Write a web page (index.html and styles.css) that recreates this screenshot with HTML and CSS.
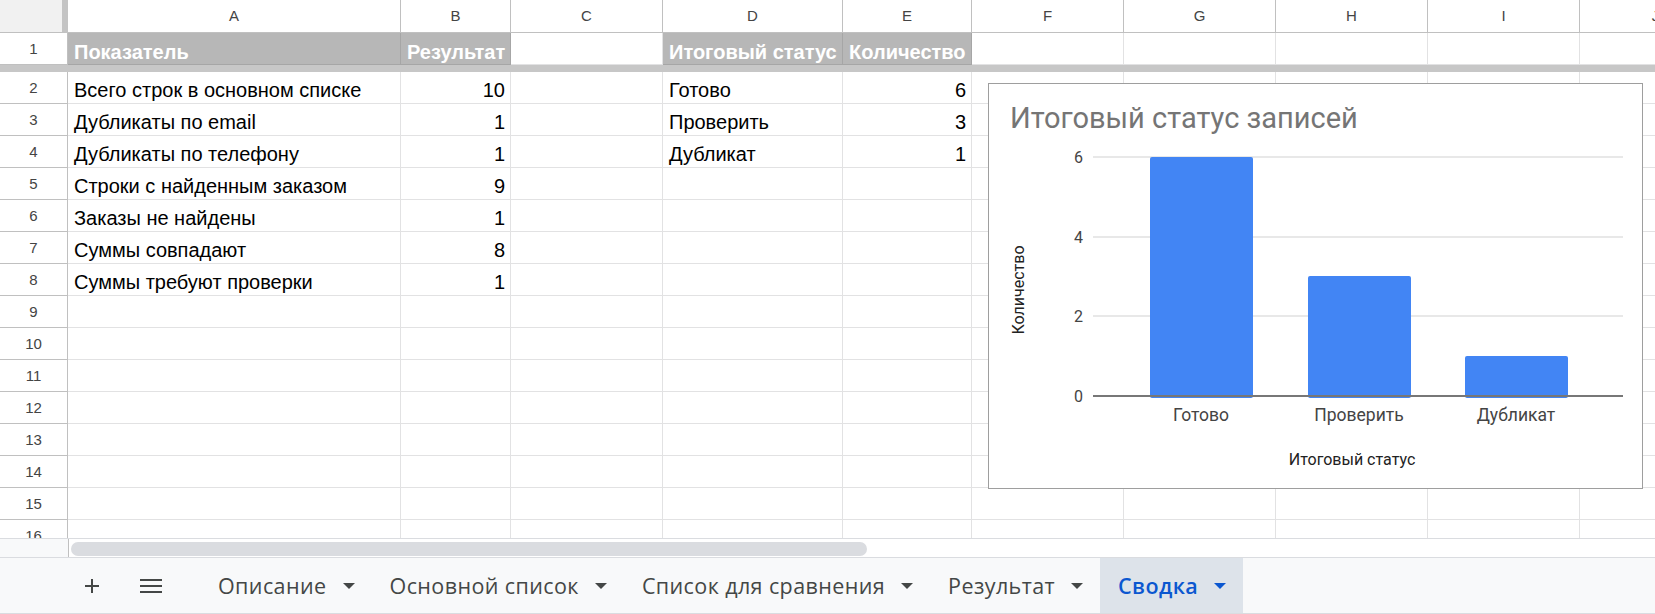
FILE: index.html
```html
<!DOCTYPE html>
<html lang="ru">
<head>
    <meta charset="UTF-8">
    <title>Сводка</title>
    <link rel="stylesheet" href="styles.css">
</head>
<body>
<div class="sheet">
    <div class="grid">
        <div class="row head">
            <div class="corner"></div>
            <div class="ch">A</div><div class="ch">B</div><div class="ch">C</div><div class="ch">D</div><div class="ch">E</div>
            <div class="ch">F</div><div class="ch">G</div><div class="ch">H</div><div class="ch">I</div><div class="ch">J</div>
        </div>
        <div class="row first">
            <div class="rh">1</div>
            <div class="cell hd">Показатель</div><div class="cell hd">Результат</div><div class="cell"></div>
            <div class="cell hd">Итоговый статус</div><div class="cell hd">Количество</div>
            <div class="cell"></div><div class="cell"></div><div class="cell"></div><div class="cell"></div><div class="cell"></div>
        </div>
        <div class="freeze"></div>
        <div class="row">
            <div class="rh">2</div>
            <div class="cell">Всего строк в основном списке</div><div class="cell num">10</div><div class="cell"></div>
            <div class="cell">Готово</div><div class="cell num">6</div>
            <div class="cell"></div><div class="cell"></div><div class="cell"></div><div class="cell"></div><div class="cell"></div>
        </div>
        <div class="row">
            <div class="rh">3</div>
            <div class="cell">Дубликаты по email</div><div class="cell num">1</div><div class="cell"></div>
            <div class="cell">Проверить</div><div class="cell num">3</div>
            <div class="cell"></div><div class="cell"></div><div class="cell"></div><div class="cell"></div><div class="cell"></div>
        </div>
        <div class="row">
            <div class="rh">4</div>
            <div class="cell">Дубликаты по телефону</div><div class="cell num">1</div><div class="cell"></div>
            <div class="cell">Дубликат</div><div class="cell num">1</div>
            <div class="cell"></div><div class="cell"></div><div class="cell"></div><div class="cell"></div><div class="cell"></div>
        </div>
        <div class="row">
            <div class="rh">5</div>
            <div class="cell">Строки с найденным заказом</div><div class="cell num">9</div><div class="cell"></div>
            <div class="cell"></div><div class="cell"></div>
            <div class="cell"></div><div class="cell"></div><div class="cell"></div><div class="cell"></div><div class="cell"></div>
        </div>
        <div class="row">
            <div class="rh">6</div>
            <div class="cell">Заказы не найдены</div><div class="cell num">1</div><div class="cell"></div>
            <div class="cell"></div><div class="cell"></div>
            <div class="cell"></div><div class="cell"></div><div class="cell"></div><div class="cell"></div><div class="cell"></div>
        </div>
        <div class="row">
            <div class="rh">7</div>
            <div class="cell">Суммы совпадают</div><div class="cell num">8</div><div class="cell"></div>
            <div class="cell"></div><div class="cell"></div>
            <div class="cell"></div><div class="cell"></div><div class="cell"></div><div class="cell"></div><div class="cell"></div>
        </div>
        <div class="row">
            <div class="rh">8</div>
            <div class="cell">Суммы требуют проверки</div><div class="cell num">1</div><div class="cell"></div>
            <div class="cell"></div><div class="cell"></div>
            <div class="cell"></div><div class="cell"></div><div class="cell"></div><div class="cell"></div><div class="cell"></div>
        </div>
        <div class="row">
            <div class="rh">9</div>
            <div class="cell"></div><div class="cell"></div><div class="cell"></div><div class="cell"></div><div class="cell"></div>
            <div class="cell"></div><div class="cell"></div><div class="cell"></div><div class="cell"></div><div class="cell"></div>
        </div>
        <div class="row">
            <div class="rh">10</div>
            <div class="cell"></div><div class="cell"></div><div class="cell"></div><div class="cell"></div><div class="cell"></div>
            <div class="cell"></div><div class="cell"></div><div class="cell"></div><div class="cell"></div><div class="cell"></div>
        </div>
        <div class="row">
            <div class="rh">11</div>
            <div class="cell"></div><div class="cell"></div><div class="cell"></div><div class="cell"></div><div class="cell"></div>
            <div class="cell"></div><div class="cell"></div><div class="cell"></div><div class="cell"></div><div class="cell"></div>
        </div>
        <div class="row">
            <div class="rh">12</div>
            <div class="cell"></div><div class="cell"></div><div class="cell"></div><div class="cell"></div><div class="cell"></div>
            <div class="cell"></div><div class="cell"></div><div class="cell"></div><div class="cell"></div><div class="cell"></div>
        </div>
        <div class="row">
            <div class="rh">13</div>
            <div class="cell"></div><div class="cell"></div><div class="cell"></div><div class="cell"></div><div class="cell"></div>
            <div class="cell"></div><div class="cell"></div><div class="cell"></div><div class="cell"></div><div class="cell"></div>
        </div>
        <div class="row">
            <div class="rh">14</div>
            <div class="cell"></div><div class="cell"></div><div class="cell"></div><div class="cell"></div><div class="cell"></div>
            <div class="cell"></div><div class="cell"></div><div class="cell"></div><div class="cell"></div><div class="cell"></div>
        </div>
        <div class="row">
            <div class="rh">15</div>
            <div class="cell"></div><div class="cell"></div><div class="cell"></div><div class="cell"></div><div class="cell"></div>
            <div class="cell"></div><div class="cell"></div><div class="cell"></div><div class="cell"></div><div class="cell"></div>
        </div>
        <div class="row">
            <div class="rh">16</div>
            <div class="cell"></div><div class="cell"></div><div class="cell"></div><div class="cell"></div><div class="cell"></div>
            <div class="cell"></div><div class="cell"></div><div class="cell"></div><div class="cell"></div><div class="cell"></div>
        </div>

        <!-- chart floats over F2:J14 -->
        <div class="chart">
            <svg width="653" height="404" viewBox="0 0 653 404">
                <text class="chart-title" x="21" y="44">Итоговый статус записей</text>
                <g class="gridlines">
                    <line x1="104" y1="73" x2="634" y2="73"/>
                    <line x1="104" y1="153" x2="634" y2="153"/>
                    <line x1="104" y1="232" x2="634" y2="232"/>
                </g>
                <g class="ticks">
                    <text x="94" y="79">6</text>
                    <text x="94" y="159">4</text>
                    <text x="94" y="238">2</text>
                    <text x="94" y="318">0</text>
                </g>
                <g class="bars">
                    <rect x="161" y="73" width="103" height="241" rx="2"/>
                    <rect x="319" y="192" width="103" height="122" rx="2"/>
                    <rect x="476" y="272" width="103" height="42" rx="2"/>
                </g>
                <line class="baseline" x1="104" y1="312" x2="634" y2="312"/>
                <g class="cats">
                    <text x="212" y="337">Готово</text>
                    <text x="370" y="337">Проверить</text>
                    <text x="527" y="337">Дубликат</text>
                </g>
                <text class="axis-title" x="363" y="381">Итоговый статус</text>
                <text class="axis-title" transform="translate(35 206) rotate(-90)">Количество</text>
            </svg>
        </div>
    </div>

    <div class="hscroll">
        <div class="hscroll-gutter"></div>
        <div class="hscroll-thumb"></div>
    </div>

    <div class="tabbar">
        <div class="tab-btn">
            <svg width="16" height="16" viewBox="0 0 16 16"><path d="M8 1v14M1 8h14" stroke="#444746" stroke-width="2"/></svg>
        </div>
        <div class="tab-btn">
            <svg width="22" height="16" viewBox="0 0 22 16"><path d="M0 2h22M0 8h22M0 14h22" stroke="#444746" stroke-width="2"/></svg>
        </div>
        <div class="tabs">
            <div class="tab">Описание <span class="caret"></span></div>
            <div class="tab">Основной список <span class="caret"></span></div>
            <div class="tab">Список для сравнения <span class="caret"></span></div>
            <div class="tab">Результат <span class="caret"></span></div>
            <div class="tab active">Сводка <span class="caret"></span></div>
        </div>
    </div>
</div>
</body>
</html>
```

FILE: styles.css
```css
body {
    margin: 0;
    font-family: "Liberation Sans", Arial, sans-serif;
    background: #fff;
    overflow: hidden;
}
.sheet {
    width: 1655px;
    height: 614px;
    display: flex;
    flex-direction: column;
    overflow: hidden;
}
.grid {
    position: relative;
    flex: none;
    height: 539px;
    overflow: hidden;
    border-bottom: 1px solid #dadce0;
    box-sizing: border-box;
}
.row {
    display: grid;
    grid-template-columns: 68px 333px 110px 152px 180px 129px 152px 152px 152px 152px 152px;
    height: 32px;
}
.row.head {
    height: 33px;
}
.corner {
    background: #f1f1f1;
    border-right: 6px solid #c4c4c4;
    border-bottom: 1px solid #c0c0c0;
}
.ch {
    border-right: 1px solid #c0c0c0;
    border-bottom: 1px solid #c0c0c0;
    text-align: center;
    font-size: 15px;
    line-height: 32px;
    color: #444;
}
.rh {
    border-right: 1px solid #c0c0c0;
    border-bottom: 1px solid #c0c0c0;
    text-align: center;
    font-size: 15px;
    line-height: 31px;
    color: #444;
}
.cell {
    box-sizing: border-box;
    border-right: 1px solid #e2e2e3;
    border-bottom: 1px solid #e2e2e3;
    padding: 7px 6px 0 6px;
    font-size: 20px;
    line-height: 23px;
    color: #000;
    white-space: nowrap;
    overflow: hidden;
}
.cell.num {
    text-align: right;
    padding-right: 5px;
}
.first .cell {
    padding-top: 8px;
}
.cell.hd {
    background: #b7b7b7;
    color: #fff;
    font-weight: bold;
    border-right-color: #a6a6a6;
    border-bottom-color: #a6a6a6;
}
.freeze {
    height: 7px;
    background: #c7c7c7;
}

/* chart */
.chart {
    position: absolute;
    left: 988px;
    top: 83px;
    width: 655px;
    height: 406px;
    box-sizing: border-box;
    border: 1px solid #9e9e9e;
    background: #fff;
}
.chart svg {
    display: block;
    font-family: Roboto, "Liberation Sans", sans-serif;
}
.chart-title {
    font-size: 29px;
    fill: #757575;
}
.gridlines line {
    stroke: #e0e0e0;
    stroke-width: 1.5;
}
.baseline {
    stroke: #777;
    stroke-width: 2;
}
.bars rect {
    fill: #4285f4;
}
.ticks text {
    font-size: 16px;
    fill: #444;
    text-anchor: end;
}
.cats text {
    font-size: 17.5px;
    fill: #444;
    text-anchor: middle;
}
.axis-title {
    font-size: 16px;
    fill: #222;
    text-anchor: middle;
}

/* horizontal scroll */
.hscroll {
    flex: none;
    height: 18px;
    display: flex;
}
.hscroll-gutter {
    width: 69px;
    background: #f8f9fa;
    border-right: 1px solid #c0c0c0;
    box-sizing: border-box;
}
.hscroll-thumb {
    width: 796px;
    height: 14px;
    margin: 3px 0 0 2px;
    border-radius: 7px;
    background: #dadce0;
}

/* sheet tabs */
.tabbar {
    flex: none;
    height: 57px;
    box-sizing: border-box;
    border-top: 1px solid #dadce0;
    border-bottom: 1px solid #dadce0;
    background: #f8f9fa;
    display: flex;
    padding-left: 72px;
}
.tab-btn {
    width: 40px;
    display: flex;
    align-items: center;
    justify-content: center;
}
.tab-btn + .tab-btn {
    margin-left: 19px;
}
.tabs {
    display: flex;
    margin-left: 29px;
}
.tab {
    display: flex;
    align-items: center;
    gap: 16px;
    padding: 0 17px 0 18px;
    font-family: "Open Sans", Roboto, sans-serif;
    font-size: 21.5px;
    letter-spacing: 0.4px;
    color: #444746;
}
.caret {
    width: 0;
    height: 0;
    border-left: 6px solid transparent;
    border-right: 6px solid transparent;
    border-top: 6px solid #444746;
}
.tab.active {
    background: #dde3ea;
    color: #0b57d0;
    font-weight: 600;
}
.tab.active .caret {
    border-top-color: #0b57d0;
}
```
